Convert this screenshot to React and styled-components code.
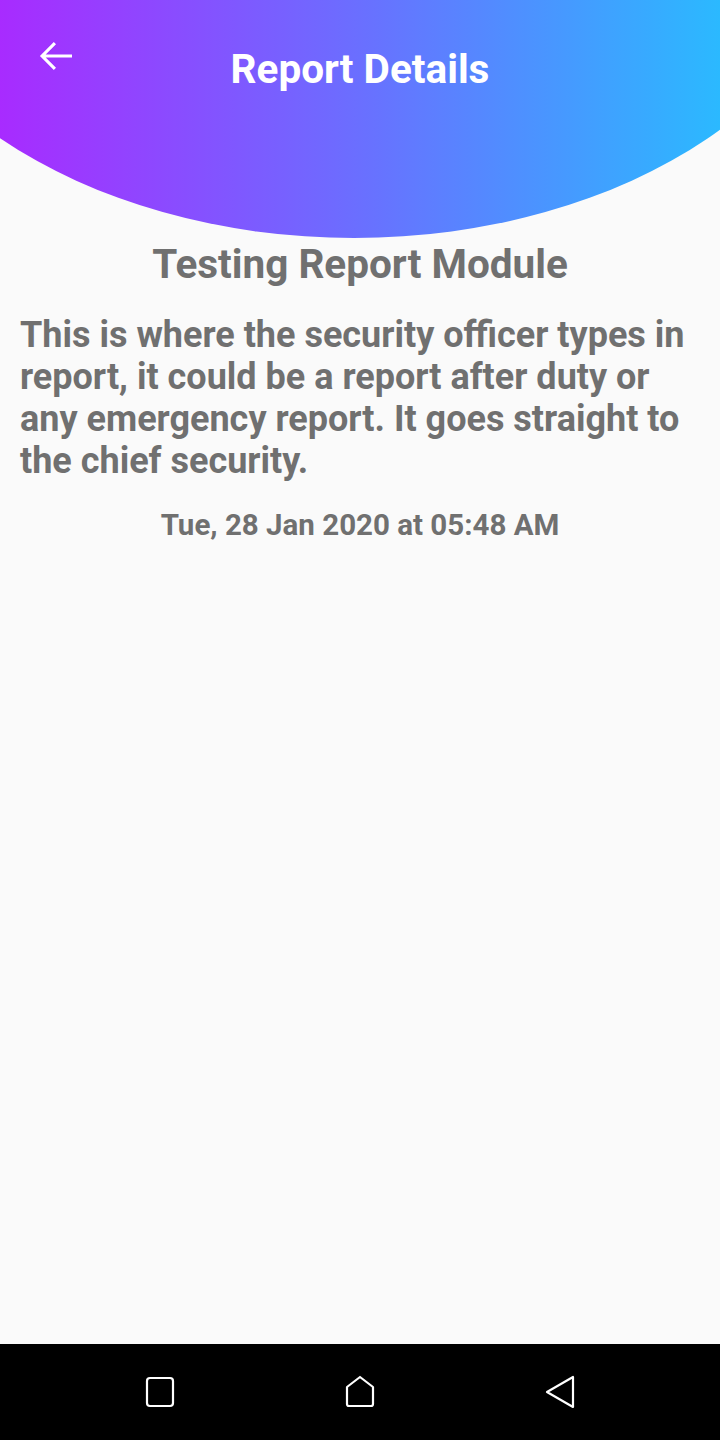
import React from "react";
import styled, { createGlobalStyle } from "styled-components";

const Global = createGlobalStyle`
  html, body { margin: 0; padding: 0; background: #fafafa; }
  body { font-family: Roboto, "Noto Sans", Arial, sans-serif; }
  * { box-sizing: border-box; }
`;

const Screen = styled.div`
  width: 720px;
  height: 1440px;
  display: flex;
  flex-direction: column;
  background: #fafafa;
  overflow: hidden;
`;

const Main = styled.main`
  flex: 1;
  display: flex;
  flex-direction: column;
`;

const Header = styled.header`
  height: 238px;
  background: linear-gradient(to right, #a82bff 0%, #6a6fff 50%, #2bb9ff 100%);
  clip-path: ellipse(500px 340px at 354px -102px);
  display: grid;
  grid-template-columns: 1fr auto 1fr;
  align-items: start;
  padding-top: 32px;
`;

const BackButton = styled.button`
  width: 48px;
  height: 48px;
  margin-left: 32px;
  padding: 0;
  border: 0;
  background: transparent;
  display: flex;
  align-items: center;
  justify-content: center;
`;

const Title = styled.h1`
  margin: 13px 0 0;
  font-size: 40.5px;
  font-weight: 700;
  color: #ffffff;
  line-height: normal;
`;

const Content = styled.section`
  display: flex;
  flex-direction: column;
  padding: 2px 20px 0;
  color: #707070;
  font-weight: 700;
`;

const Subject = styled.h2`
  margin: 0;
  text-align: center;
  font-size: 40.5px;
  font-weight: 700;
  line-height: normal;
`;

const Body = styled.p`
  margin: 26px 0 0;
  font-size: 36px;
  line-height: 42px;
`;

const DateLine = styled.div`
  margin-top: 26px;
  text-align: center;
  font-size: 29.5px;
  line-height: normal;
`;

const NavBar = styled.nav`
  height: 96px;
  background: #000;
  display: grid;
  grid-template-columns: repeat(3, 1fr);
  align-items: center;
  justify-items: center;
  padding: 0 60px;
`;

const NavIcon = styled.svg`
  width: 32px;
  height: 36px;
  display: block;
`;

export default function App() {
  return (
    <Screen>
      <Global />
      <Main>
        <Header>
          <BackButton aria-label="Back">
            <svg width="48" height="48" viewBox="0 0 24 24">
              <path
                fill="#fff"
                d="M20 11.3H6.85l5.15-5.15-1.1-1.1L3.95 12l6.95 6.95 1.1-1.1-5.15-5.15H20v-1.4z"
              />
            </svg>
          </BackButton>
          <Title>Report Details</Title>
          <div />
        </Header>
        <Content>
          <Subject>Testing Report Module</Subject>
          <Body>
            This is where the security officer types in report, it could be a
            report after duty or any emergency report. It goes straight to the
            chief security.
          </Body>
          <DateLine>Tue, 28 Jan 2020 at 05:48 AM</DateLine>
        </Content>
      </Main>
      <NavBar>
        <NavIcon viewBox="0 0 32 36">
          <rect x="3" y="4" width="26" height="28" rx="3" fill="none" stroke="#fff" strokeWidth="2.2" />
        </NavIcon>
        <NavIcon viewBox="0 0 32 36">
          <path
            d="M16 3 L29 13 V30 a2 2 0 0 1 -2 2 H5 a2 2 0 0 1 -2 -2 V13 Z"
            fill="none"
            stroke="#fff"
            strokeWidth="2.2"
            strokeLinejoin="round"
          />
        </NavIcon>
        <NavIcon viewBox="0 0 32 36">
          <path
            d="M29 3 V33 L3 18 Z"
            fill="none"
            stroke="#fff"
            strokeWidth="2.2"
            strokeLinejoin="round"
          />
        </NavIcon>
      </NavBar>
    </Screen>
  );
}
